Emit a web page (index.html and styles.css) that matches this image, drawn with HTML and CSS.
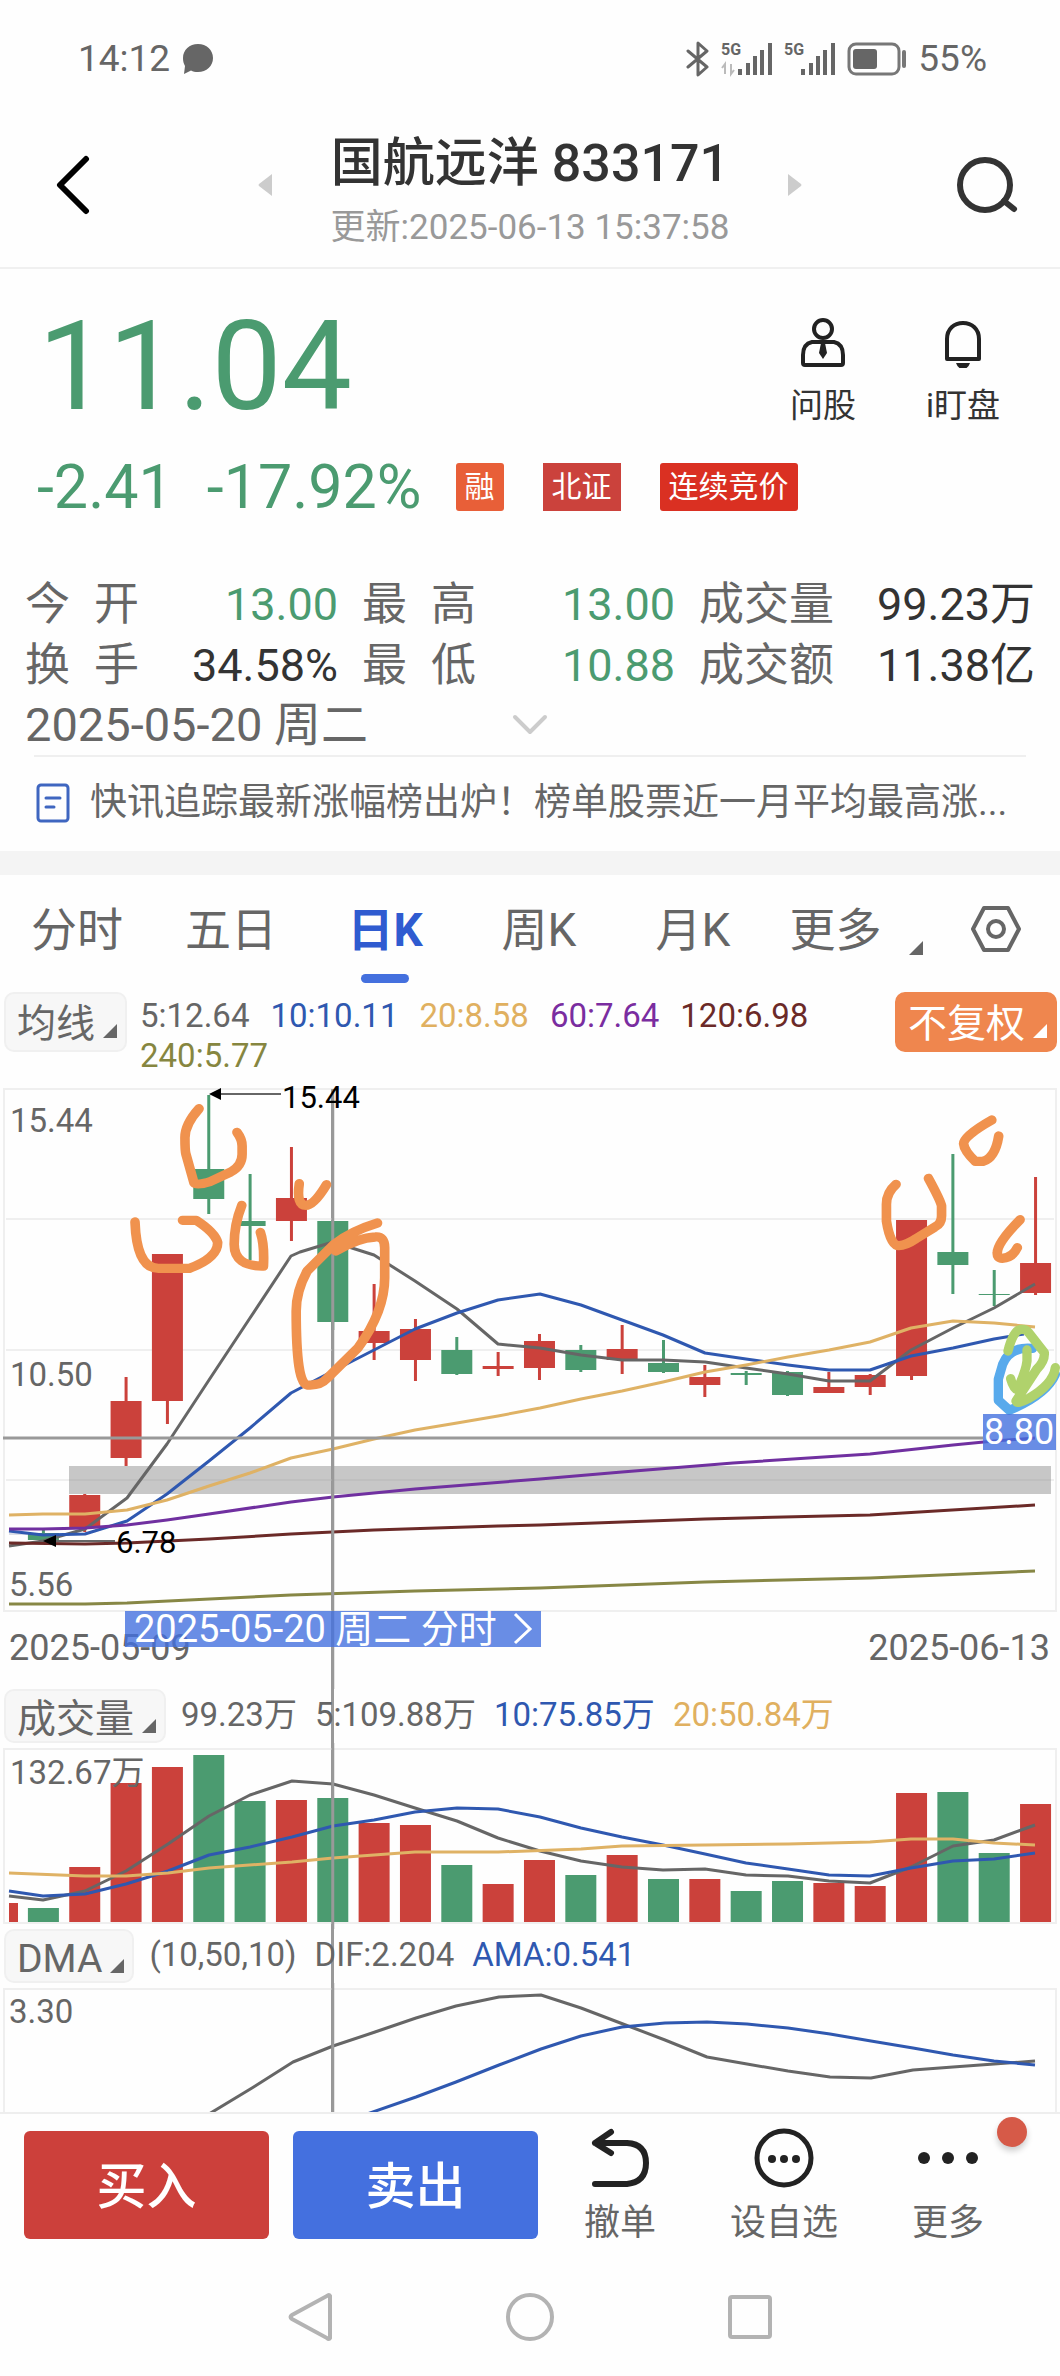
FILE: index.html
```html
<!DOCTYPE html>
<html lang="zh-CN">
<head>
<meta charset="utf-8">
<meta name="viewport" content="width=device-width, initial-scale=1">
<title>国航远洋 833171</title>
<link rel="stylesheet" href="styles.css">
</head>
<body>
<div class="status">
  <div class="status-group">
    <span>14:12</span>
    <svg width="32" height="32" viewBox="0 0 32 32"><path d="M16 1C24.500 1 31 7 31 15s-6.500 14-15 14c-3 0-5-.6-7-1.600L2 31l1-8C1.600 20.500 1 18 1 15 1 7 7.500 1 16 1Z" fill="#666"/></svg>
  </div>
  <div class="status-group status-right">
    <svg width="24" height="36" viewBox="0 0 24 36" fill="none" stroke="#666" stroke-width="3" stroke-linejoin="round" stroke-linecap="round"><path d="M2 10 21 26 12 34V2l9 8L2 26"/></svg>
    <svg width="52" height="36" viewBox="0 0 52 36"><text x="0" y="14" class="sig-text">5G</text><path d="M4 33V23l-3 4M10 23v10l3-4" stroke="#bbb" stroke-width="2" fill="none"/><path d="M19 28v6M27 22v12M34 15v19M41 9v25M49 2v32" stroke="#666" stroke-width="4"/></svg>
    <svg width="52" height="36" viewBox="0 0 52 36"><text x="0" y="14" class="sig-text">5G</text><path d="M19 28v6M27 22v12M34 15v19M41 9v25M49 2v32" stroke="#666" stroke-width="4"/></svg>
    <svg width="60" height="34" viewBox="0 0 60 34"><rect x="2" y="2" width="50" height="30" rx="7" fill="none" stroke="#777" stroke-width="3"/><rect x="6" y="7" width="24" height="20" rx="3" fill="#666"/><path d="M57 10v14" stroke="#777" stroke-width="4" stroke-linecap="round"/></svg>
    <span>55%</span>
  </div>
</div>

<header class="header">
  <button class="icon-btn back" aria-label="返回"><svg width="34" height="60" viewBox="0 0 34 60" fill="none" stroke="#000" stroke-width="6" stroke-linecap="round" stroke-linejoin="round"><path d="M30 4 4 30l26 26"/></svg></button>
  <div class="stock-nav">
    <button class="icon-btn" aria-label="上一只"><svg width="14" height="24" viewBox="0 0 14 24"><path d="M14 1v22L1 13q-1-1 0-2Z" fill="#ccc"/></svg></button>
    <div class="stock-title">
      <h1>国航远洋 833171</h1>
      <p>更新:2025-06-13 15:37:58</p>
    </div>
    <button class="icon-btn" aria-label="下一只"><svg width="14" height="24" viewBox="0 0 14 24"><path d="M0 1v22l13-10q1-1 0-2Z" fill="#ccc"/></svg></button>
  </div>
  <button class="icon-btn search" aria-label="搜索"><svg width="62" height="58" viewBox="0 0 62 58" fill="none" stroke="#333" stroke-width="6" stroke-linecap="round"><circle cx="29" cy="29" r="25"/><path d="m48 45 10 8"/></svg></button>
</header>

<section class="quote">
  <div class="quote-top">
    <div class="price">11.04</div>
    <div class="actions">
      <button class="action"><svg width="48" height="50" viewBox="0 0 48 50" fill="none" stroke="#222" stroke-width="4"><circle cx="24" cy="11" r="9"/><path d="M13 24h22q9 2 9 13v8q0 2-2 2H6q-2 0-2-2v-8q0-11 9-13Z" stroke-linejoin="round"/><path d="M22 25h4l2 10-4 6-4-6Z" fill="#222" stroke="none"/></svg><span>问股</span></button>
      <button class="action"><svg width="48" height="50" viewBox="0 0 48 50" fill="none" stroke="#222" stroke-width="4"><path d="M8 41V21C8 11 15 5 24 5s16 6 16 16v20Z" stroke-linejoin="round"/><path d="M17 45h14q-2 6-7 6t-7-6Z" fill="#222" stroke="none"/></svg><span>i盯盘</span></button>
    </div>
  </div>
  <div class="change">
    <span>-2.41</span>
    <span>-17.92%</span>
    <div class="badges">
      <span class="badge badge-margin">融</span>
      <span class="badge badge-bse">北证</span>
      <span class="badge badge-auction">连续竞价</span>
    </div>
  </div>
  <dl class="stats">
    <div><dt>今 开</dt><dd class="down">13.00</dd></div>
    <div><dt>最 高</dt><dd class="down">13.00</dd></div>
    <div><dt class="tight">成交量</dt><dd>99.23万</dd></div>
    <div><dt>换 手</dt><dd>34.58%</dd></div>
    <div><dt>最 低</dt><dd class="down">10.88</dd></div>
    <div><dt class="tight">成交额</dt><dd>11.38亿</dd></div>
  </dl>
  <div class="day-row">
    <span>2025-05-20 周二</span>
    <button class="icon-btn" aria-label="展开"><svg width="36" height="22" viewBox="0 0 36 22" fill="none" stroke="#ccc" stroke-width="4" stroke-linecap="round" stroke-linejoin="round"><path d="m3 3 15 15L33 3"/></svg></button>
  </div>
  <a class="news" href="#">
    <svg width="34" height="42" viewBox="0 0 34 42" fill="none" stroke="#3f66c0" stroke-width="3" stroke-linecap="round"><rect x="2" y="3" width="30" height="36" rx="3"/><path d="M10 16h14M10 25h8"/></svg>
    <span>快讯追踪最新涨幅榜出炉！榜单股票近一月平均最高涨...</span>
  </a>
</section>

<nav class="tabs">
  <button class="tab">分时</button>
  <button class="tab">五日</button>
  <button class="tab active">日K</button>
  <button class="tab">周K</button>
  <button class="tab">月K</button>
  <button class="tab tab-more">更多<i class="corner"></i></button>
  <button class="tab tab-set" aria-label="设置"><svg width="52" height="48" viewBox="0 0 52 48" fill="none" stroke="#666" stroke-width="4" stroke-linejoin="round"><path d="M14 3h24l11 21-11 21H14L3 24Z"/><circle cx="26" cy="24" r="8"/></svg></button>
</nav>

<section class="charts">
  <div class="crosshair"></div>
  <div class="toolbar toolbar-main">
    <button class="chip">均线<i class="corner"></i></button>
    <div class="legend">
      <span class="c-gray">5:12.64</span><span class="c-blue">10:10.11</span><span class="c-gold">20:8.58</span><span class="c-purple">60:7.64</span><span class="c-brown">120:6.98</span><span class="c-olive">240:5.77</span>
    </div>
    <button class="chip chip-adjust">不复权<i class="corner"></i></button>
  </div>
  <svg class="plot" viewBox="0 1080 1060 608">
    <g class="frame"><path d="M4 1088H1056V1610H4Z"/><path d="M6 1218H1054M6 1349H1054M6 1479H1054"/></g>
    <rect x="69" y="1465" width="982" height="28" fill="#888" opacity=".46"/>
    <path d="M9 1533h18" stroke="#b9bfd0" stroke-width="1"/>
    <g id="candles"></g>
    <g class="line">
      <polyline class="s-gray" points="9,1545 43,1540 85,1528 127,1497 167,1443 209,1379 250,1317 291,1255 300,1251 333,1241 374,1254 415,1280 457,1308 498,1343 540,1347 581,1354 622,1359 663,1359 705,1361 746,1367 788,1373 829,1380 870,1380 911,1349 953,1327 994,1307 1035,1283"/>
      <polyline class="s-blue" points="9,1530 43,1534 85,1533 127,1520 167,1493 209,1460 250,1427 291,1392 333,1370 374,1349 415,1328 457,1312 498,1299 540,1293 581,1304 622,1319 663,1334 705,1352 746,1358 788,1364 829,1369 870,1369 911,1355 953,1347 994,1338 1024,1333"/>
      <polyline class="s-gold" points="9,1514 43,1513 85,1513 127,1509 167,1499 209,1485 250,1472 291,1457 333,1448 374,1438 415,1429 457,1422 498,1415 540,1407 581,1398 622,1390 663,1381 705,1371 746,1364 788,1356 829,1349 870,1341 911,1327 953,1320 994,1322 1035,1326"/>
      <polyline class="s-purple" points="9,1528 43,1528 85,1527 127,1524 167,1519 209,1513 291,1501 333,1496 415,1488 540,1478 622,1471 733,1462 870,1453 953,1444 994,1440 1035,1437"/>
      <polyline class="s-brown" points="9,1542 85,1543 127,1542 209,1538 291,1533 374,1529 498,1525 540,1524 705,1518 870,1514 1035,1504"/>
      <polyline class="s-olive" points="9,1603 85,1603 127,1602 291,1594 415,1590 540,1587 705,1581 870,1577 1035,1570"/>
    </g>
    <path class="cross" d="M3 1437H983M332.750 1088V1688"/>
    <g class="axis">
      <text x="10" y="1131">15.44</text>
      <text x="10" y="1385">10.50</text>
      <text x="9" y="1595">5.56</text>
      <text class="date" x="9" y="1659">2025-05-09</text>
      <text class="date" x="1050" y="1659" text-anchor="end">2025-06-13</text>
    </g>
    <g class="mark">
      <path d="M221 1093h60M56 1540h59" stroke="#666" stroke-width="2"/>
      <path d="m209 1093 12-6v12ZM43 1540l13-6v12Z"/>
      <text x="282" y="1107">15.44</text>
      <text x="116" y="1552">6.78</text>
    </g>
    <g class="pen" transform="translate(0 1070) scale(.3444 .3333)">
      <path d="M578 113Q537 160 537 200T540 250L563 335Q570 345 610 332L670 303Q703 285 703 250V225Q703 205 688 184"/>
      <path d="M392 453Q397 592 460 592H550Q632 560 632 515 625 485 570 448H530"/>
      <path d="M702 403Q680 460 680 520 680 587 765 585 768 520 756 484"/>
      <path d="M869 338Q860 403 888 403 912 403 948 341"/>
      <path d="M1096 456Q1020 480 970 520L892 600Q860 660 860 720 860 940 892 942 930 945 950 922L1040 830Q1117 720 1117 620V530Q1117 495 1090 498 1040 500 975 540"/>
    </g>
    <g class="pen" transform="translate(520 1070) scale(.3444 .3333)">
      <path d="M1092 340Q1064 365 1064 400V450Q1075 524 1100 524 1120 524 1150 503L1205 468Q1224 458 1224 435V405Q1222 390 1186 322"/>
      <path d="M1370 147Q1288 195 1288 218 1290 240 1322 271H1345Q1380 260 1390 195"/>
      <path d="M1452 446Q1386 515 1386 545 1384 562 1400 562 1430 560 1444 530"/>
    </g>
    <g class="pen" transform="translate(960 1310) scale(.3333)">
      <path class="pen-blue" d="M218 112Q150 105 128 160L115 205V268L148 298Q260 250 286 190"/>
      <path class="pen-green" d="M144 120Q160 55 185 55 200 55 206 65L253 125Q255 150 230 175L168 270Q172 280 205 263 280 220 286 170M201 117V150Q198 180 172 236 160 232 152 203"/>
    </g>
    <rect class="tag" x="983" y="1413" width="73" height="36"/>
    <text class="tag-text price-tag" x="984" y="1443">8.80</text>
    <rect class="tag" x="125" y="1610" width="416" height="36"/>
    <text class="tag-text" x="134" y="1641">2025-05-20 周二 分时</text>
    <path d="m515 1613 15 15-15 14" stroke="#fff" stroke-width="3" fill="none"/>
  </svg>

  <div class="toolbar">
    <button class="chip">成交量<i class="corner"></i></button>
    <div class="legend"><span class="c-gray">99.23万</span><span class="c-gray">5:109.88万</span><span class="c-blue">10:75.85万</span><span class="c-gold">20:50.84万</span></div>
  </div>
  <svg class="plot" viewBox="0 1742 1060 186">
    <g class="frame"><path d="M4 1748H1056V1922H4Z"/></g>
    <rect class="up" x="9" y="1902" width="9" height="19"/>
    <g id="volumes"></g>
    <g class="axis"><text x="10" y="1783">132.67万</text></g>
    <g class="line">
      <polyline class="s-gray" points="9,1895 43,1899 85,1890 126,1870 168,1843 209,1815 250,1794 292,1780 333,1783 374,1794 415,1807 457,1820 498,1837 540,1850 581,1860 622,1866 663,1869 705,1868 746,1874 788,1875 829,1880 870,1882 911,1866 953,1845 994,1839 1035,1824"/>
      <polyline class="s-blue" points="9,1890 43,1895 85,1893 126,1883 168,1870 209,1854 250,1846 292,1836 333,1825 374,1819 415,1811 457,1807 498,1808 540,1816 581,1827 622,1836 663,1844 705,1853 746,1862 788,1868 829,1874 870,1875 911,1867 953,1860 994,1858 1035,1852"/>
      <polyline class="s-gold" points="9,1872 85,1875 126,1875 168,1872 209,1867 292,1861 333,1857 415,1851 498,1851 581,1848 622,1845 705,1844 788,1843 870,1841 911,1838 953,1838 994,1842 1035,1844"/>
    </g>
    <path class="cross" d="M332.750 1742V1928"/>
  </svg>

  <div class="toolbar">
    <button class="chip">DMA<i class="corner"></i></button>
    <div class="legend"><span class="c-gray">(10,50,10)</span><span class="c-gray">DIF:2.204</span><span class="c-blue">AMA:0.541</span></div>
  </div>
  <svg class="plot" viewBox="0 1982 1060 129">
    <g class="frame"><path d="M4 2120V1988H1056V2120"/></g>
    <g class="axis"><text x="9" y="2022">3.30</text></g>
    <g class="line">
      <polyline class="s-gray" points="209,2113 252,2087 293,2061 333,2045 375,2031 416,2017 456,2005 499,1996 541,1994 581,2007 623,2023 665,2039 707,2056 747,2063 788,2070 830,2076 871,2077 913,2069 953,2066 994,2063 1035,2060"/>
      <polyline class="s-blue" points="367,2113 416,2096 456,2081 499,2064 541,2048 581,2035 622,2026 665,2022 707,2021 747,2023 788,2027 830,2033 871,2040 913,2047 953,2054 994,2060 1035,2064"/>
    </g>
    <path class="cross" d="M332.750 1982V2111"/>
  </svg>
</section>

<footer class="trade">
  <button class="trade-btn buy">买入</button>
  <button class="trade-btn sell">卖出</button>
  <div class="tools">
    <button class="tool"><svg width="62" height="62" viewBox="0 0 62 62" fill="none" stroke="#222" stroke-width="6" stroke-linecap="round" stroke-linejoin="round"><path d="M22 5 6 16l16 10M6 16h32q19 1 19 20T38 57H6"/></svg><span>撤单</span></button>
    <button class="tool"><svg width="62" height="62" viewBox="0 0 62 62" fill="#222"><circle cx="31" cy="31" r="27" fill="none" stroke="#222" stroke-width="5"/><circle cx="19" cy="32" r="4"/><circle cx="31" cy="32" r="4"/><circle cx="43" cy="32" r="4"/></svg><span>设自选</span></button>
    <button class="tool"><svg width="62" height="62" viewBox="0 0 62 62" fill="#222"><circle cx="7" cy="31" r="6"/><circle cx="31" cy="31" r="6"/><circle cx="55" cy="31" r="6"/></svg><span>更多</span></button>
  </div>
  <i class="dot"></i>
</footer>

<nav class="system">
  <button class="icon-btn" aria-label="后退"><svg width="52" height="52" viewBox="0 0 52 52"><path d="M46 5v42q-1 2-3 0L8 28q-3-2 0-4L43 5q2-2 3 0Z"/></svg></button>
  <button class="icon-btn" aria-label="主页"><svg width="52" height="52" viewBox="0 0 52 52"><circle cx="26" cy="26" r="22"/></svg></button>
  <button class="icon-btn" aria-label="多任务"><svg width="52" height="52" viewBox="0 0 52 52"><rect x="6" y="6" width="40" height="40" rx="2"/></svg></button>
</nav>
<script src="chart.js"></script>
</body>
</html>
```
FILE: styles.css
```css
* { box-sizing: border-box; }
body {
  margin: 0;
  background: #fefefe;
  color: #333;
  font-family: Roboto, "Noto Sans CJK SC", sans-serif;
  overflow-x: hidden;
}
button {
  border: 0;
  padding: 0;
  margin: 0;
  background: none;
  font: inherit;
  color: inherit;
}
svg { display: block; flex: none; }
h1, p, dl, dt, dd { margin: 0; }
.icon-btn { display: flex; }

.status {
  display: flex;
  justify-content: space-between;
  padding: 37px 73px 0 78px;
  font-size: 37px;
  line-height: 44px;
  color: #666;
}
.status-group { display: flex; align-items: center; gap: 12px; }
.status-right { gap: 11px; }
.sig-text { font: 700 16px Roboto, sans-serif; fill: #666; }

.header {
  display: grid;
  grid-template-columns: 1fr auto 1fr;
  align-items: center;
  padding: 41px 42px 19px;
  border-bottom: 2px solid #f0f0f0;
}
.back { margin-left: 14px; }
.search { justify-self: end; }
.stock-nav { display: flex; align-items: center; gap: 59px; }
.stock-title { padding-top: 10px; text-align: center; }
.stock-title h1 { font-size: 52px; line-height: 64px; font-weight: 500; }
.stock-title p { margin-top: 12px; font-size: 35px; line-height: 40px; color: #999; }

.quote { padding-top: 34px; border-bottom: 24px solid #f4f4f4; }
.quote-top { display: flex; justify-content: space-between; padding: 0 60px 0 38px; }
.price { font-size: 125px; line-height: 128px; color: #4b9b70; }
.actions { display: flex; gap: 70px; padding-top: 15px; }
.action {
  display: flex;
  flex-direction: column;
  align-items: center;
  gap: 18px;
  font-size: 33px;
  line-height: 40px;
}
.change {
  display: flex;
  align-items: center;
  gap: 34px;
  margin-top: 28px;
  padding-left: 37px;
  font-size: 61px;
  line-height: 56px;
  color: #4b9b70;
}
.badges { display: flex; gap: 39px; }
.badge {
  padding: 0 9px;
  border-radius: 3px;
  font-size: 30px;
  line-height: 48px;
  color: #fff;
}
.badge-margin { background: #e85f38; }
.badge-bse { background: #cb423c; border-radius: 0; }
.badge-auction { background: #da3022; }

.stats {
  display: grid;
  grid-template-columns: 313fr 313fr 336fr;
  column-gap: 24px;
  padding: 59px 25px 0;
  font-size: 45px;
  line-height: 61px;
}
.stats div { display: flex; justify-content: space-between; }
.stats dt { width: 114px; text-align-last: justify; color: #666; }
.stats .tight { width: auto; }
.stats .down { color: #4b9b70; }
.day-row {
  display: grid;
  grid-template-columns: 1fr auto 1fr;
  align-items: center;
  padding: 0 25px;
  font-size: 47px;
  line-height: 58px;
  color: #666;
}
.news {
  display: flex;
  align-items: center;
  gap: 20px;
  margin: 1px 34px 0;
  padding: 22px 0 24px 2px;
  border-top: 2px solid #efefef;
  font-size: 37px;
  line-height: 48px;
  color: #666;
  text-decoration: none;
}

.tabs {
  display: grid;
  grid-template-columns: repeat(5, 154fr) 172fr 108fr;
  align-items: start;
  padding: 25px 10px 0 0;
  font-size: 46px;
  line-height: 60px;
  color: #666;
}
.tab { display: flex; justify-content: center; }
.active { flex-direction: column; align-items: center; font-weight: 700; color: #2f5bd0; }
.active::after {
  content: "";
  width: 48px;
  height: 9px;
  margin-top: 14px;
  border-radius: 5px;
  background: #4470de;
}
.tab-more { align-items: flex-end; gap: 27px; }
.tab-set { padding-top: 5px; }
.corner {
  margin-bottom: 5px;
  border-left: 14px solid transparent;
  border-bottom: 14px solid currentColor;
}

.charts { position: relative; padding-top: 9px; }
.toolbar, .plot { position: relative; z-index: 1; }
.toolbar { display: flex; align-items: flex-start; gap: 15px; padding-left: 4px; }
.toolbar-main { gap: 13px; padding: 0 3px 5px 4px; }
.chip {
  display: flex;
  align-items: flex-end;
  flex: none;
  gap: 8px;
  padding: 9px 8px 3px 11px;
  border: 2px solid #f0f0f0;
  border-radius: 10px;
  background: #f7f7f7;
  font-size: 39px;
  line-height: 38px;
  color: #666;
}
.toolbar-main .chip { padding: 11px 8px 7px 11px; }
.toolbar-main .chip-adjust { border-color: #ef864e; background: #ef864e; color: #fff; }
.legend {
  display: flex;
  flex: 1;
  flex-wrap: wrap;
  column-gap: 18px;
  padding-top: 6px;
  font-size: 33px;
  line-height: 40px;
}
.toolbar-main .legend { column-gap: 21px; padding-top: 4px; }
.c-gray { color: #666; }
.c-blue { color: #2f58b0; }
.c-gold { color: #e0b060; }
.c-purple { color: #7a2da0; }
.c-brown { color: #6b2a28; }
.c-olive { color: #868640; }

.plot { width: 100%; height: auto; overflow: hidden; }
.frame { fill: none; stroke: #efefef; stroke-width: 2; }
.line { fill: none; stroke-width: 3; stroke-linejoin: round; }
.s-gray { stroke: #666; }
.s-blue { stroke: #2f58b0; }
.s-gold { stroke: #dfb265; }
.s-purple { stroke: #7030a0; }
.s-brown { stroke: #6b2a28; }
.s-olive { stroke: #878745; }
.up { fill: #cb413b; }
.fall { fill: #4b9b70; }
.axis { font-size: 33px; fill: #666; }
.axis .date { font-size: 36px; }
.mark { font: 31px Roboto, sans-serif; fill: #000; }
.tag { fill: #4470de; opacity: .8; }
.tag-text { font-size: 38px; fill: #fff; }
.price-tag { font-size: 36px; }
.pen { fill: none; stroke: #f0924e; stroke-width: 28; stroke-linecap: round; stroke-linejoin: round; }
.pen-blue { stroke: #58aaec; }
.pen-green { stroke: #b0d26c; }
.cross { stroke: #999; stroke-width: 3; }
.crosshair {
  position: absolute;
  top: 105px;
  bottom: 0;
  left: 31.25%;
  width: 3px;
  background: #999;
}

.trade {
  position: relative;
  display: flex;
  align-items: flex-start;
  gap: 24px;
  padding: 17px 60px 0 24px;
  border-top: 2px solid #eee;
}
.trade-btn {
  flex: 245;
  padding: 24px 0 20px;
  border-radius: 6px;
  font-size: 50px;
  line-height: 64px;
  font-weight: 500;
  color: #fff;
}
.buy { background: #cc403b; }
.sell { background: #4470df; }
.tools { display: flex; flex: 416; justify-content: space-between; padding-left: 22px; }
.tool {
  display: flex;
  flex-direction: column;
  align-items: center;
  gap: 12px;
  margin-top: -4px;
  padding: 0 16px 0 0;
  font-size: 36px;
  line-height: 44px;
  color: #666;
}
.dot {
  position: absolute;
  top: 3px;
  right: 33px;
  width: 30px;
  height: 30px;
  border-radius: 50%;
  background: #d65a48;
  box-shadow: 0 4px 6px rgba(0, 0, 0, .2);
}

.system {
  display: flex;
  justify-content: center;
  gap: 168px;
  padding: 46px 0 34px;
  fill: none;
  stroke: #b3b3b3;
  stroke-width: 4;
}
```
FILE: chart.js
```js
// Each candle: [direction, wick top, wick bottom, body top, body bottom, volume bar top]
const days = [
  ["fall", 1529, 1539, 1532, 1539, 1907],
  ["up", 1493, 1531, 1494, 1526, 1866],
  ["up", 1376, 1465, 1400, 1457, 1782],
  ["up", 1253, 1423, 1253, 1400, 1766],
  ["fall", 1094, 1213, 1168, 1198, 1754],
  ["fall", 1173, 1259, 1220, 1225, 1800],
  ["up", 1146, 1240, 1197, 1220, 1799],
  ["fall", 1220, 1329, 1220, 1321, 1797],
  ["up", 1283, 1359, 1330, 1342, 1822],
  ["up", 1318, 1380, 1328, 1359, 1824],
  ["fall", 1336, 1374, 1349, 1373, 1864],
  ["up", 1351, 1375, 1365, 1368, 1883],
  ["up", 1333, 1379, 1340, 1367, 1859],
  ["fall", 1344, 1371, 1349, 1369, 1874],
  ["up", 1324, 1373, 1348, 1359, 1854],
  ["fall", 1339, 1372, 1362, 1371, 1878],
  ["up", 1364, 1396, 1376, 1384, 1878],
  ["fall", 1370, 1384, 1372, 1374, 1890],
  ["fall", 1370, 1395, 1371, 1394, 1880],
  ["up", 1371, 1392, 1386, 1392, 1882],
  ["up", 1373, 1394, 1374, 1386, 1885],
  ["up", 1219, 1379, 1219, 1375, 1792],
  ["fall", 1153, 1293, 1251, 1264, 1791],
  ["fall", 1269, 1305, 1293, 1294, 1852],
  ["up", 1176, 1294, 1262, 1292, 1803]
];
const FIRST = 43.4, STEP = 41.34, BODY = 31, FLOOR = 1921;

function bar(parent, kind, center, width, top, bottom) {
  const r = document.createElementNS("http://www.w3.org/2000/svg", "rect");
  r.setAttribute("class", kind);
  r.setAttribute("x", center - width / 2);
  r.setAttribute("y", top);
  r.setAttribute("width", width);
  r.setAttribute("height", bottom - top);
  parent.appendChild(r);
}

const candles = document.getElementById("candles");
const volumes = document.getElementById("volumes");
days.forEach(([kind, high, low, top, bottom, volume], i) => {
  const x = FIRST + STEP * i;
  bar(candles, kind, x, 3, high, low);
  bar(candles, kind, x, BODY, top, bottom);
  bar(volumes, kind, x, BODY, volume, FLOOR);
});
```
